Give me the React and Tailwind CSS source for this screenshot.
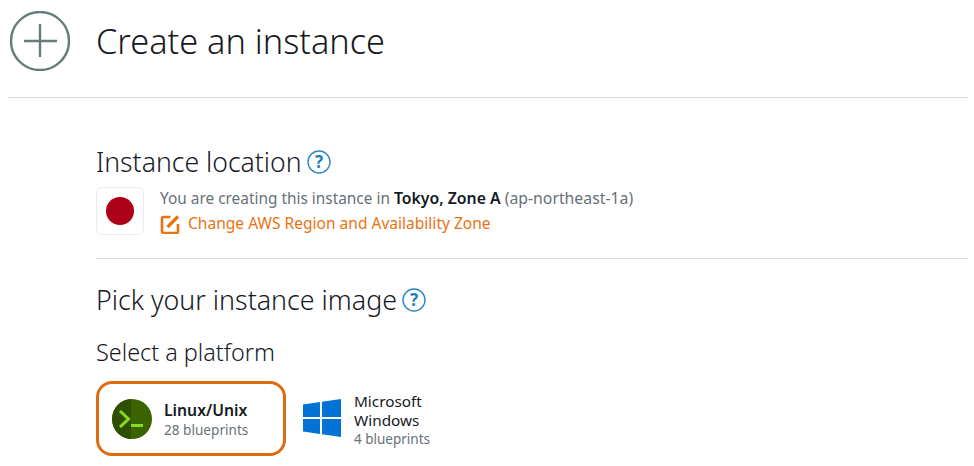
import React from 'react';

const HelpIcon = ({ className }) => (
  <svg viewBox="0 0 24 24" className={className}>
    <circle cx="12" cy="12" r="11" fill="none" stroke="#2b87c5" strokeWidth="1.4" />
    <text x="12" y="18" textAnchor="middle" fontSize="17" fontWeight="700" fill="#1d7ec0" fontFamily="Noto Sans, sans-serif">?</text>
  </svg>
);

const PlatformLinux = () => (
  <div className="w-[190px] h-[75px] border-[3px] border-[#dd6b10] rounded-[16px] flex items-center pl-[13px] gap-[12px]">
    <svg viewBox="0 0 40 40" className="w-10 h-10 shrink-0">
      <circle cx="20" cy="20" r="20" fill="#3b6300" />
      <path d="M19 0.03a20 20 0 0 0 0 39.94z" fill="#2f4f00" />
      <path d="M8 12l8.5 8-8.5 8" fill="none" stroke="#86dc1f" strokeWidth="3" />
      <path d="M19 26.5h12" fill="none" stroke="#86dc1f" strokeWidth="3" />
    </svg>
    <div className="flex flex-col pt-[3px]">
      <span className="text-[15.75px] leading-[19px] font-semibold text-[#16191f]">Linux/Unix</span>
      <span className="text-[13.6px] leading-[19px] text-[#687078]">28 blueprints</span>
    </div>
  </div>
);

const PlatformWindows = () => (
  <div className="h-[75px] flex items-center pl-[17px] gap-[13px]">
    <svg viewBox="0 0 38 38" className="w-[38px] h-[38px] shrink-0 -mt-[2px]">
      <path d="M0 5.5L17 3v15H0zM19 2.7L38 0v18H19zM0 20h17v15L0 32.5zM19 20h19v18l-19-2.7z" fill="#0272d6" />
    </svg>
    <div className="flex flex-col pt-[2px]">
      <span className="w-[90px] text-[15.3px] leading-[19px] text-[#16191f]">Microsoft Windows</span>
      <span className="text-[13.5px] leading-[18px] text-[#687078]">4 blueprints</span>
    </div>
  </div>
);

const App = () => {
  return (
    <div className="w-[974px] h-[466px] overflow-hidden bg-white pl-2 pr-1.5" style={{ fontFamily: '"Noto Sans", sans-serif' }}>
      <header className="h-[98px] border-b border-[#d5dbdb] flex items-start gap-[26px] pl-[2px] pt-[11px]">
        <svg viewBox="0 0 60 60" className="w-[60px] h-[60px] shrink-0">
          <circle cx="30" cy="30" r="29" fill="none" stroke="#687b7b" strokeWidth="2.4" />
          <path d="M30 13v33M14 30h33" fill="none" stroke="#687b7b" strokeWidth="2.4" />
        </svg>
        <h1 className="text-[34.3px] leading-[60px] font-light text-[#16191f]">Create an instance</h1>
      </header>

      <main className="ml-[88px]">
        <section className="h-[161px] border-b border-[#d5dbdb] pt-[46px]">
          <div className="flex items-center gap-[5px] h-[36px]">
            <h2 className="text-[26.6px] leading-[36px] font-light text-[#16191f]">Instance location</h2>
            <HelpIcon className="w-6 h-6" />
          </div>
          <div className="flex items-start gap-4 mt-[7px]">
            <div className="w-12 h-12 rounded-md border border-[#eaeded] flex items-center justify-center shrink-0">
              <div className="w-7 h-7 rounded-full bg-[#ae0019]" />
            </div>
            <div className="flex flex-col -mt-[1px]">
              <p className="text-[15.4px] leading-[25px] text-[#687078]">
                You are creating this instance in <b className="text-[15.8px] font-semibold text-[#16191f]">Tokyo, Zone A</b> <span className="text-[15.8px]">(ap-northeast-1a)</span>
              </p>
              <a className="flex items-center gap-[8px] text-[15.55px] leading-[25px] text-[#ec7211]">
                <svg viewBox="0 0 20 20" className="w-5 h-5 shrink-0">
                  <path d="M10.5 3H3.5a1.5 1.5 0 0 0-1.5 1.5v13a1.5 1.5 0 0 0 1.5 1.5h13a1.5 1.5 0 0 0 1.5-1.5V10" fill="none" stroke="#ec7211" strokeWidth="2.6" />
                  <path d="M7.5 13L18 2.5" fill="none" stroke="#ec7211" strokeWidth="3.2" />
                </svg>
                Change AWS Region and Availability Zone
              </a>
            </div>
          </div>
        </section>

        <section className="pt-[22px]">
          <div className="flex items-center gap-[5px] h-[38px]">
            <h2 className="text-[26.8px] leading-[38px] font-light text-[#16191f]">Pick your instance image</h2>
            <HelpIcon className="w-6 h-6" />
          </div>
          <h3 className="text-[23.4px] leading-[30px] font-light text-[#16191f] mt-[18px]">Select a platform</h3>
          <div className="flex mt-[14px]">
            <PlatformLinux />
            <PlatformWindows />
          </div>
        </section>
      </main>
    </div>
  );
};

export default App;
